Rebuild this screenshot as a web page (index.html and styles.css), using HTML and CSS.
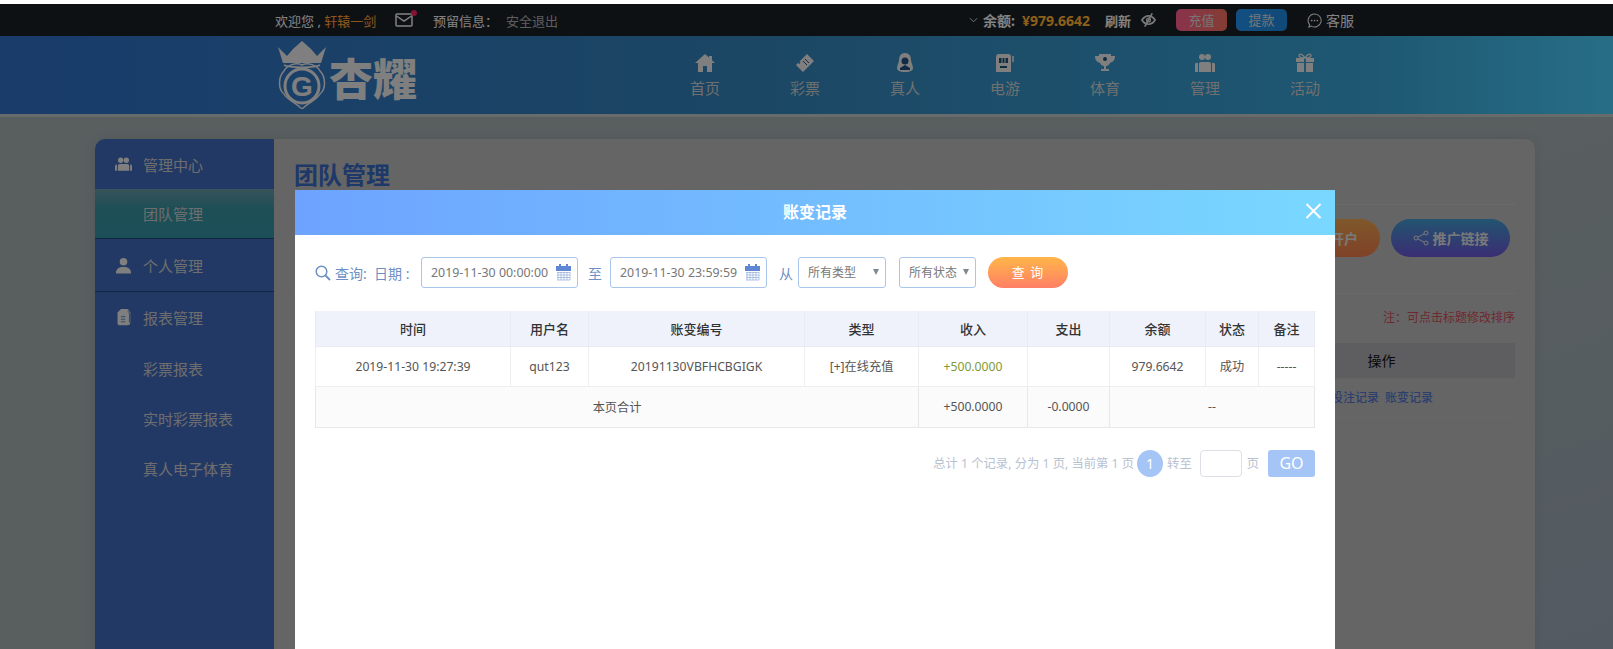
FILE: index.html
```html
<!DOCTYPE html>
<html lang="zh-CN">
<head>
<meta charset="utf-8">
<title>账变记录</title>
<link rel="stylesheet" href="styles.css">
</head>
<body>
<div class="page">
  <div class="topbar">
    <div class="top-left">
      <span class="welcome">欢迎您 , <span class="uname">轩辕一剑</span></span>
      <span class="mail">
        <svg class="mail-ic" viewBox="0 0 18 14"><rect x="1" y="1" width="16" height="12" rx="1" fill="none" stroke="currentColor" stroke-width="1.5"/><path d="M1.5 3 9 8l7.5-5" fill="none" stroke="currentColor" stroke-width="1.5"/></svg>
        <i class="dot"></i>
      </span>
      <span class="reserved">预留信息：</span>
      <span class="logout">安全退出</span>
    </div>
    <div class="top-right">
      <svg class="chev" viewBox="0 0 10 6"><path d="M1 1l4 4 4-4" fill="none" stroke="currentColor" stroke-width="1"/></svg>
      <span class="bal-label">余额:</span>
      <span class="bal">¥979.6642</span>
      <span class="refresh">刷新</span>
      <svg class="eye" viewBox="0 0 16 14"><path d="M1 7c2-3.200 4.500-4.500 7-4.500S13 3.800 15 7c-2 3.200-4.500 4.500-7 4.500S3 10.200 1 7z" fill="none" stroke="currentColor" stroke-width="1.800"/><circle cx="8" cy="7" r="2" fill="none" stroke="currentColor" stroke-width="1.500"/><path d="M12 0 4 14" stroke="currentColor" stroke-width="1.800"/></svg>
      <span class="tbtn tbtn-red">充值</span>
      <span class="tbtn tbtn-blue">提款</span>
      <svg class="chat" viewBox="0 0 16 16"><path d="M8 1a7 7 0 1 1-3.500 13L2 15l.8-2.600A7 7 0 0 1 8 1z" fill="none" stroke="currentColor" stroke-width="1.100"/><circle cx="5" cy="8" r=".9" fill="currentColor"/><circle cx="8" cy="8" r=".9" fill="currentColor"/><circle cx="11" cy="8" r=".9" fill="currentColor"/></svg>
      <span class="service">客服</span>
    </div>
  </div>

  <header class="header">
    <div class="logo">
      <svg class="logo-mark" viewBox="0 0 54 68">
        <path d="M3 6l9 9 6-7 9-8 9 8 6 7 9-9-5 16H8z" fill="#e8e8e8"/>
        <path d="M9 24c5 3 31 3 36 0" fill="none" stroke="#e8e8e8" stroke-width="1.500"/>
        <path d="M27 24c6-3 15 0 18 6 6 6 6 18 0 23-3 6-11 8-18 15-7-7-15-9-18-15-6-5-6-17 0-23 3-6 12-9 18-6z" fill="none" stroke="#e8e8e8" stroke-width="1.500"/>
        <circle cx="27" cy="45" r="17" fill="none" stroke="#e8e8e8" stroke-width="3"/>
        <text class="logo-g" x="27" y="55">G</text>
      </svg>
      <span class="logo-text">杏耀</span>
    </div>
    <nav class="nav">
      <a class="nav-item">
        <svg class="nav-ic" viewBox="0 0 20 20"><path d="M10 1 0 10h3v9h5v-6h4v6h5v-9h3l-3-2.700V3h-3v1.600z" fill="currentColor"/></svg>
        <span>首页</span>
      </a>
      <a class="nav-item">
        <svg class="nav-ic" viewBox="0 0 20 20"><path d="M12 1l7 7-11 11-7-7 2-2 1.500 1 1-1.500-1-1z" fill="currentColor"/><path d="M8 8l4 4M10 6l4 4" stroke="#1f4f80" stroke-width="1"/></svg>
        <span>彩票</span>
      </a>
      <a class="nav-item">
        <svg class="nav-ic" viewBox="0 0 20 20"><path d="M10 0c4 0 6 3 6 7 0 3 2 5 2 8 0 2-2 4-8 4s-8-2-8-4c0-3 2-5 2-8 0-4 2-7 6-7z" fill="currentColor"/><circle cx="10" cy="8" r="3.500" fill="#1f4f80"/><path d="M5 15l5-3 5 3v2H5z" fill="#1f4f80"/></svg>
        <span>真人</span>
      </a>
      <a class="nav-item">
        <svg class="nav-ic" viewBox="0 0 20 20"><path d="M4 1h9a3 3 0 0 1 3 3v15H1V4a3 3 0 0 1 3-3z" fill="currentColor"/><rect x="4" y="5" width="9" height="5" fill="#1f5070"/><path d="M7 5v5M10 5v5" stroke="currentColor"/><rect x="5" y="13" width="7" height="2" fill="#1f5070"/><path d="M18 3v6" stroke="currentColor" stroke-width="1.500"/></svg>
        <span>电游</span>
      </a>
      <a class="nav-item">
        <svg class="nav-ic" viewBox="0 0 20 20"><path d="M4 1h12v2h4c0 4-2 6-5 7-1 2-2 3-4 3v3h3v2H6v-2h3v-3c-2 0-3-1-4-3C2 9 0 7 0 3h4z" fill="currentColor"/><circle cx="10" cy="6" r="2" fill="#1f5070"/></svg>
        <span>体育</span>
      </a>
      <a class="nav-item">
        <svg class="nav-ic" viewBox="0 0 20 20"><circle cx="7" cy="4" r="3" fill="currentColor"/><circle cx="13" cy="4" r="3" fill="currentColor"/><path d="M6 9h8a2 2 0 0 1 2 2v8H4v-8a2 2 0 0 1 2-2zM0 12a2 2 0 0 1 3-2v9H0zM20 12a2 2 0 0 0-3-2v9h3z" fill="currentColor"/></svg>
        <span>管理</span>
      </a>
      <a class="nav-item">
        <svg class="nav-ic" viewBox="0 0 20 20"><path d="M1 5h8v4H1zM11 5h8v4h-8zM2 10h7v9H2zM11 10h7v9h-7z" fill="currentColor"/><path d="M10 5C8 1 4 0 4 2.500S7 5 10 5zm0 0c2-4 6-5 6-2.500S13 5 10 5z" fill="none" stroke="currentColor" stroke-width="1.300"/></svg>
        <span>活动</span>
      </a>
    </nav>
  </header>

  <div class="main">
    <aside class="side">
      <div class="side-item side-h50">
        <svg class="side-ic" viewBox="0 0 18 15"><circle cx="6" cy="3" r="2.800" fill="currentColor"/><circle cx="12" cy="3" r="2.800" fill="currentColor"/><path d="M5 7h8a2 2 0 0 1 2 2v5H3V9a2 2 0 0 1 2-2zM0 9a2 2 0 0 1 2-1.500V14H0zM18 9a2 2 0 0 0-2-1.500V14h2z" fill="currentColor"/></svg>
        管理中心
      </div>
      <div class="side-item side-active side-sub">团队管理</div>
      <div class="side-item side-h53 side-line">
        <svg class="side-ic" viewBox="0 0 18 17"><circle cx="9" cy="4.500" r="4" fill="currentColor"/><path d="M1 17c0-5 3-7 8-7s8 2 8 7z" fill="currentColor"/></svg>
        个人管理
      </div>
      <div class="side-item side-h51">
        <svg class="side-ic" viewBox="0 0 18 20"><path d="M6 0h8l3 4v12a3 3 0 0 1-3 3H4a2 2 0 0 1-2-2V4z" fill="currentColor"/><path d="M14 2l2 3v11" fill="none" stroke="#4a6fb0" stroke-width="1"/><path d="M6 9h5M6 12h5M6 15h5" stroke="#4a6fb0" stroke-width="1"/></svg>
        报表管理
      </div>
      <div class="side-item side-h50 side-sub">彩票报表</div>
      <div class="side-item side-h50 side-sub">实时彩票报表</div>
      <div class="side-item side-h50 side-sub">真人电子体育</div>
    </aside>
    <section class="panel">
      <h1 class="panel-title">团队管理</h1>
      <div class="panel-actions">
        <span class="pill pill-orange">开户</span>
        <span class="pill pill-blue">
          <svg class="share" viewBox="0 0 16 16"><circle cx="3" cy="8" r="2" fill="none" stroke="currentColor"/><circle cx="13" cy="3" r="2" fill="none" stroke="currentColor"/><circle cx="13" cy="13" r="2" fill="none" stroke="currentColor"/><path d="M5 7l6-3M5 9l6 3" stroke="currentColor"/></svg>
          推广链接
        </span>
      </div>
      <p class="panel-note">注：可点击标题修改排序</p>
      <div class="ptable">
        <div class="ptable-head">操作</div>
        <div class="ptable-row"><a>投注记录</a><a>账变记录</a></div>
      </div>
    </section>
  </div>

  <div class="overlay">
    <div class="modal">
      <div class="modal-head">
        <span>账变记录</span>
        <svg class="modal-close" viewBox="0 0 17 16"><path d="M1.500 1l14 14M15.500 1l-14 14" stroke="#fff" stroke-width="2"/></svg>
      </div>
      <div class="modal-body">
        <div class="query">
          <svg class="q-ic" viewBox="0 0 16 16"><circle cx="6.500" cy="6.500" r="5.300" fill="none" stroke="#6d8fc4" stroke-width="1.500"/><path d="M10.500 10.500 15 15" stroke="#6d8fc4" stroke-width="1.800"/></svg>
          <span class="q-label q-search">查询:</span>
          <span class="q-label q-date">日期 :</span>
          <span class="date-in">2019-11-30 00:00:00
            <svg class="cal" viewBox="0 0 15 17"><rect x="0" y="2" width="15" height="5" fill="#5f86d2"/><rect x="3" y="0" width="2" height="3" fill="#5f86d2"/><rect x="10" y="0" width="2" height="3" fill="#5f86d2"/><path d="M1 8.500h13M1 11h13M1 13.500h13M1 16h13M2 8v8M5 8v8M8 8v8M11 8v8M14 8v8" stroke="#9db4de" stroke-width=".8" fill="none"/></svg>
          </span>
          <span class="q-label q-to">至</span>
          <span class="date-in">2019-11-30 23:59:59
            <svg class="cal" viewBox="0 0 15 17"><rect x="0" y="2" width="15" height="5" fill="#5f86d2"/><rect x="3" y="0" width="2" height="3" fill="#5f86d2"/><rect x="10" y="0" width="2" height="3" fill="#5f86d2"/><path d="M1 8.500h13M1 11h13M1 13.500h13M1 16h13M2 8v8M5 8v8M8 8v8M11 8v8M14 8v8" stroke="#9db4de" stroke-width=".8" fill="none"/></svg>
          </span>
          <span class="q-label q-from">从</span>
          <span class="sel sel-type">所有类型<i class="arrow"></i></span>
          <span class="sel sel-state">所有状态<i class="arrow"></i></span>
          <span class="q-btn">查 询</span>
        </div>
        <table class="rec">
          <colgroup>
            <col class="c1"><col class="c2"><col class="c3"><col class="c4"><col class="c5"><col class="c6"><col class="c7"><col class="c8"><col class="c9">
          </colgroup>
          <thead>
            <tr><th>时间</th><th>用户名</th><th>账变编号</th><th>类型</th><th>收入</th><th>支出</th><th>余额</th><th>状态</th><th>备注</th></tr>
          </thead>
          <tbody>
            <tr class="r-data"><td>2019-11-30 19:27:39</td><td>qut123</td><td>20191130VBFHCBGIGK</td><td>[+]在线充值</td><td class="plus">+500.0000</td><td></td><td>979.6642</td><td>成功</td><td>-----</td></tr>
            <tr class="r-total"><td colspan="4">本页合计</td><td>+500.0000</td><td>-0.0000</td><td colspan="3">--</td></tr>
          </tbody>
        </table>
        <div class="pager">
          <span class="pg-text">总计 1 个记录, 分为 1 页, 当前第 1 页</span>
          <span class="pg-cur">1</span>
          <span class="pg-text pg-goto">转至</span>
          <span class="pg-in"></span>
          <span class="pg-text pg-unit">页</span>
          <span class="pg-go">GO</span>
        </div>
      </div>
    </div>
  </div>
</div>
</body>
</html>
```

FILE: styles.css
```css
* { box-sizing: border-box; }
html, body { margin: 0; height: 100%; overflow: hidden; }
body {
  background: #fff;
  padding-top: 4px;
  font-family: "Noto Sans", "Noto Sans CJK SC", sans-serif;
  font-size: 13px;
}
a { color: inherit; text-decoration: none; }

.page {
  position: relative;
  height: 645px;
  overflow: hidden;
  background: linear-gradient(160deg, #a2adae 0%, #a2adae 55%, #98a5b2 100%);
}

/* top bar */
.topbar {
  height: 32px;
  background: #1b1f26;
  color: #eee;
  display: flex;
  justify-content: space-between;
  align-items: center;
  padding: 0 259px 0 275px;
}
.top-left, .top-right { display: flex; align-items: center; }
.uname { color: #ff9f30; }
.welcome { width: 120px; white-space: nowrap; }
.mail { position: relative; width: 38px; height: 14px; color: #eee; display: block; }
.mail-ic { position: absolute; left: 0; top: 0; width: 18px; height: 14px; }
.dot { position: absolute; left: 16px; top: -3px; width: 6px; height: 6px; border-radius: 50%; background: #f0245a; }
.reserved { width: 73px; white-space: nowrap; }
.logout { color: #aaa; }
.chev { width: 9px; height: 6px; margin-right: 5px; }
.bal-label { font-weight: 700; font-size: 14px; }
.bal { font-weight: 700; font-size: 14px; color: #ffb030; margin-left: 7px; }
.refresh { font-weight: 700; margin-left: 15px; }
.eye { width: 15px; height: 14px; margin-left: 10px; color: #ddd; }
.tbtn {
  width: 51px;
  height: 22px;
  border-radius: 5px;
  text-align: center;
  line-height: 22px;
  color: #d8d8d8;
}
.tbtn-red { margin-left: 20px; background: linear-gradient(90deg, #fb5d8a, #f07060); }
.tbtn-blue { margin-left: 9px; background: linear-gradient(90deg, #2590ee, #1f86d8); }
.chat { width: 15px; height: 15px; margin-left: 20px; }
.service { margin-left: 4px; font-size: 14px; }

/* header */
.header {
  height: 81px;
  border-bottom: 3px solid #bcc3c5;
  background: linear-gradient(90deg, #2f6dc3 0%, #3280b6 45%, #38a0d0 85%, #48c8f5 100%);
  display: flex;
  padding-left: 275px;
  color: #ccc;
}
.logo { width: 380px; display: flex; align-items: center; height: 78px; }
.logo-mark { width: 54px; height: 68px; }
.logo-g { font: 700 28px "Liberation Sans", sans-serif; fill: #e8e8e8; text-anchor: middle; }
.logo-text {
  font: 900 44px/1 "Noto Sans CJK SC", sans-serif;
  color: #e8e8e8;
  margin-top: 4px;
  white-space: nowrap;
}
.nav { display: flex; }
.nav-item {
  width: 100px;
  display: flex;
  flex-direction: column;
  align-items: center;
  padding-top: 17px;
  font-size: 15px;
  line-height: 20px;
}
.nav-ic { width: 20px; height: 20px; margin-bottom: 5px; color: #e8e8e8; }

/* main */
.main {
  display: flex;
  width: 1440px;
  height: 600px;
  margin: 22px 0 0 95px;
  box-shadow: 0 0 12px rgba(0, 0, 0, .08);
  border-radius: 10px 10px 0 0;
}
.side {
  width: 179px;
  flex: none;
  background: #4169b9;
  border-radius: 10px 0 0 0;
  color: #c8c8c8;
  font-size: 15px;
}
.side-item { display: flex; align-items: center; padding-left: 20px; }
.side-h50 { height: 50px; }
.side-h51 { height: 51px; }
.side-h53 { height: 53px; }
.side-sub { padding-left: 48px; }
.side-active {
  height: 50px;
  background: linear-gradient(180deg, #6797a3 0%, #37909f 40%, #32909f 100%);
  border-bottom: 1px solid #1e4a7c;
}
.side-line { border-bottom: 1px solid #1e4a7c; }
.side-ic { width: 17px; height: 17px; margin-right: 11px; color: #e8e8e8; }

.panel {
  flex: 1;
  background: #b9b9b9;
  border-radius: 0 10px 0 0;
  padding: 20px 20px 0;
}
.panel-title {
  margin: 0;
  height: 46px;
  font-size: 24px;
  line-height: 32px;
  font-weight: 700;
  color: #3766bf;
  border-bottom: 1px solid #c2c2c2;
}
.panel-actions {
  display: flex;
  justify-content: flex-end;
  gap: 11px;
  height: 89px;
  padding: 14px 5px 0 0;
  border-bottom: 1px solid #c2c2c2;
}
.pill {
  height: 38px;
  border-radius: 19px;
  display: flex;
  align-items: center;
  justify-content: center;
  font-weight: 700;
  font-size: 14px;
  color: #ddd;
}
.pill-orange {
  width: 118px;
  justify-content: flex-end;
  padding-right: 22px;
  background: linear-gradient(180deg, #e8a050, #e87848);
}
.pill-blue { width: 119px; background: linear-gradient(180deg, #409acc, #6a52d0); }
.share { width: 16px; height: 16px; margin-right: 4px; }
.panel-note {
  margin: 0;
  height: 49px;
  line-height: 48px;
  text-align: right;
  font-size: 12px;
  color: #cc4a58;
}
.ptable { margin-left: 954px; }
.ptable-head {
  height: 35px;
  line-height: 35px;
  background: #acacb0;
  color: #111;
  font-size: 14px;
  text-align: center;
  width: 267px;
}
.ptable-row {
  height: 40px;
  line-height: 40px;
  width: 267px;
  border-bottom: 1px solid #bebebe;
  color: #5072c8;
  font-size: 12px;
  font-weight: 500;
  display: flex;
  gap: 6px;
  padding-left: 83px;
}

/* overlay + modal */
.overlay {
  position: absolute;
  inset: 0;
  background: rgba(0, 0, 0, .45);
}
.modal {
  position: absolute;
  left: 295px;
  top: 186px;
  width: 1040px;
  height: 470px;
  background: #fff;
}
.modal-head {
  position: relative;
  height: 45px;
  background: linear-gradient(90deg, #6da3ff, #79d8ff);
  color: #fff;
  font-size: 16px;
  font-weight: 700;
  line-height: 45px;
  text-align: center;
}
.modal-close { position: absolute; left: 1010px; top: 13px; width: 17px; height: 16px; }
.modal-body { padding: 22px 20px 0; }

.query { display: flex; align-items: center; height: 31px; color: #6d8fc4; }
.q-ic { width: 16px; height: 16px; margin-right: 4px; flex: none; }
.q-label { font-size: 14px; white-space: nowrap; }
.q-search { width: 39px; }
.q-date { width: 47px; }
.q-to { margin: 0 8px 0 10px; }
.q-from { margin: 0 5px 0 12px; }
.date-in {
  position: relative;
  width: 157px;
  height: 31px;
  border: 1px solid #a9c6ec;
  border-radius: 3px;
  padding-left: 9px;
  line-height: 29px;
  font-size: 12.4px;
  color: #777;
  white-space: nowrap;
}
.cal { position: absolute; right: 6px; top: 6px; width: 15px; height: 17px; }
.sel {
  position: relative;
  height: 31px;
  border: 1px solid #a9c6ec;
  border-radius: 3px;
  padding-left: 9px;
  line-height: 29px;
  font-size: 12px;
  color: #777;
}
.sel-type { width: 88px; margin-right: 13px; }
.sel-state { width: 77px; margin-right: 12px; }
.arrow {
  position: absolute;
  right: 6px;
  top: 11px;
  border-left: 3px solid transparent;
  border-right: 3px solid transparent;
  border-top: 6px solid #808890;
}
.q-btn {
  width: 80px;
  height: 31px;
  border-radius: 16px;
  background: linear-gradient(180deg, #ffb648, #ff7f66);
  color: #fff;
  text-align: center;
  line-height: 30px;
  font-size: 13px;
  letter-spacing: 1px;
}

.rec {
  width: 999px;
  margin-top: 23px;
  border-collapse: collapse;
  table-layout: fixed;
  color: #555;
  font-size: 12.2px;
  text-align: center;
}
.c1 { width: 195px; }
.c2 { width: 78px; }
.c3 { width: 216px; }
.c4 { width: 114px; }
.c5 { width: 109px; }
.c6 { width: 82px; }
.c7 { width: 96px; }
.c8 { width: 53px; }
.c9 { width: 56px; }
.rec th {
  height: 35px;
  background: #eff2fb;
  color: #333;
  font-size: 13px;
  font-weight: 500;
  border: 1px solid #e8ebf3;
  border-top: 0;
  padding: 0;
}
.rec td { border: 1px solid #eee; padding: 0; }
.r-data td { height: 40px; }
.r-total td { height: 41px; background: #fbfbfb; border-color: #e8e8e8; }
.plus { color: #7f9b35; }

.pager {
  display: flex;
  align-items: center;
  justify-content: flex-end;
  height: 27px;
  margin-top: 22px;
}
.pg-text { font-size: 12.3px; color: #b8c1d0; white-space: nowrap; }
.pg-cur {
  width: 26px;
  height: 27px;
  margin-left: 3px;
  border-radius: 50%;
  background: #a5c5f7;
  color: #fff;
  text-align: center;
  line-height: 27px;
  font-size: 14px;
}
.pg-goto { margin-left: 4px; }
.pg-in {
  width: 42px;
  height: 27px;
  margin-left: 8px;
  border: 1px solid #dcdfe6;
  border-radius: 4px;
}
.pg-unit { margin-left: 5px; }
.pg-go {
  width: 47px;
  height: 27px;
  margin-left: 9px;
  border-radius: 3px;
  background: #a5c5f7;
  color: #fff;
  font-size: 16px;
  text-align: center;
  line-height: 27px;
}
```
